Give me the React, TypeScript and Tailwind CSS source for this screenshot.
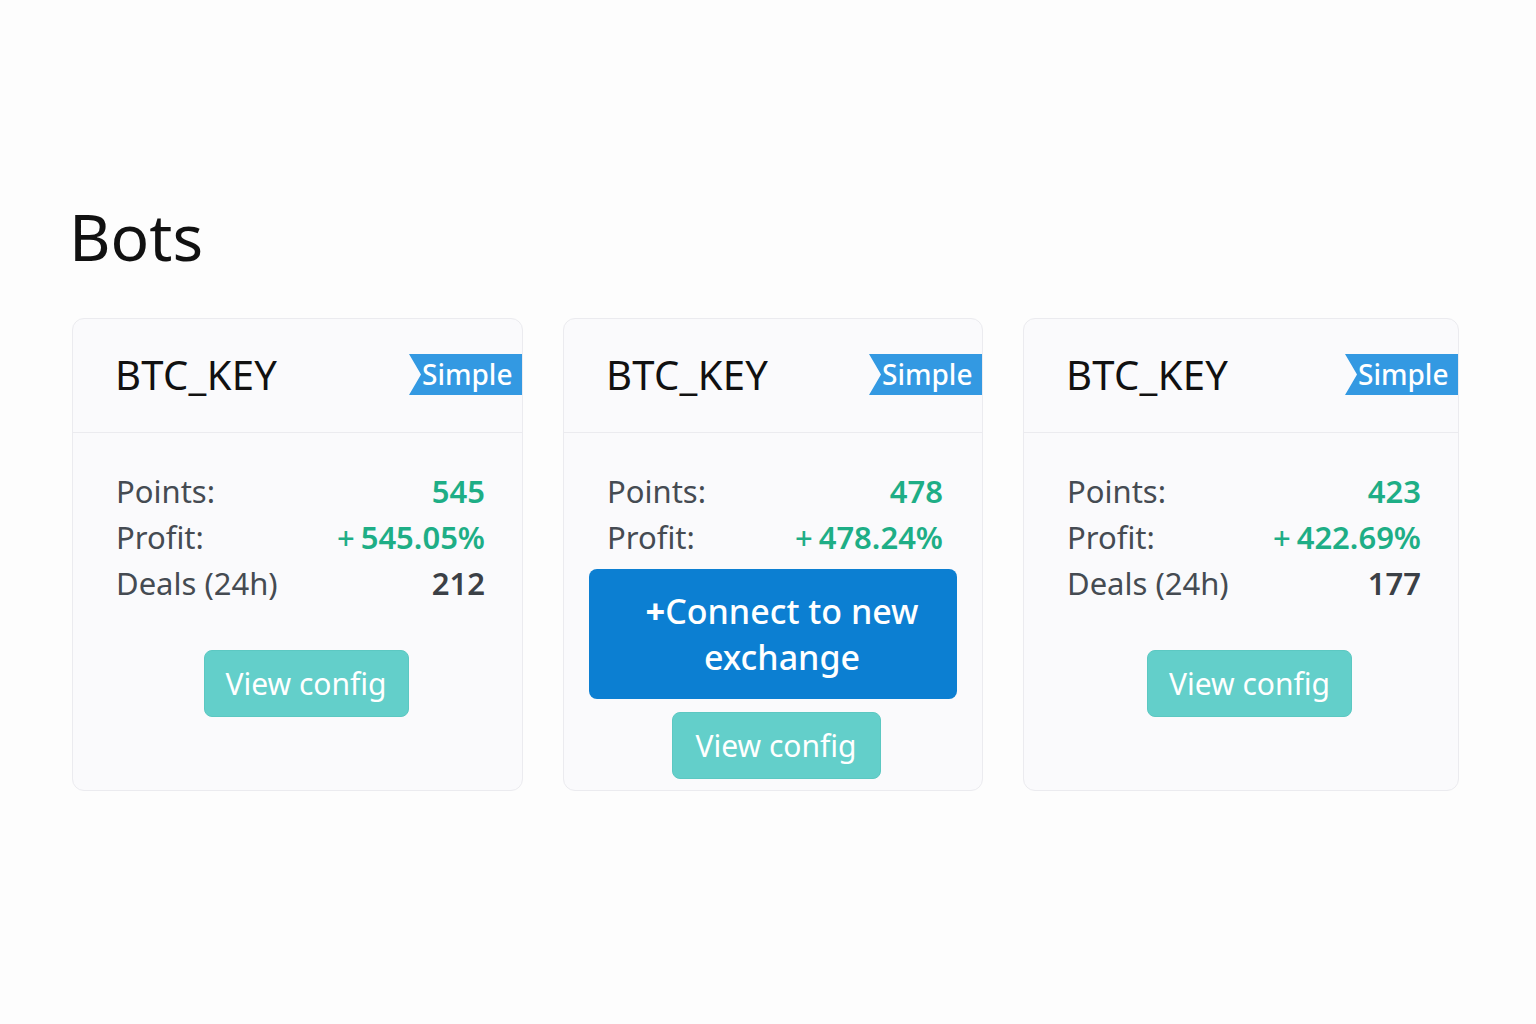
import React from "react";

const font = { fontFamily: '"Noto Sans", "Open Sans", sans-serif' };

function Badge() {
  return (
    <div
      className="h-[41px] w-[113px] bg-[#3399e2] text-white text-[28px] leading-[41px] pl-[13px] font-medium"
      style={{ clipPath: "polygon(0 0, 100% 0, 100% 100%, 0 100%, 12px 50%)" }}
    >
      Simple
    </div>
  );
}

function Header() {
  return (
    <div className="h-[114px] flex items-center justify-between pl-[42px] pb-[2px] border-b border-[#ebebef]">
      <div className="text-[40px] text-[#111] leading-none tracking-[0.3px]">BTC_KEY</div>
      <Badge />
    </div>
  );
}

function Row({ label, value, green, plus }: { label: string; value: string; green?: boolean; plus?: boolean }) {
  return (
    <div className="flex items-center justify-between h-[46px] text-[31px]">
      <span className="text-[#454b52]">{label}</span>
      <span className={green ? "text-[#1eae86] font-semibold" : "text-[#3b4046] font-semibold"}>
        {plus && <span className="font-medium mr-[6px]">+</span>}
        {value}
      </span>
    </div>
  );
}

function ViewConfig({ w }: { w: string }) {
  return (
    <button className={`${w} h-[67px] rounded-lg bg-[#63cfca] text-white text-[30px] leading-none border border-[#5cc8c2]`}>
      View config
    </button>
  );
}

function BotCard({ width, points, profit, deals }: { width: string; points: string; profit: string; deals: string }) {
  return (
    <div className={`${width} h-[473px] rounded-xl border border-[#ebebef] bg-[#fafafc] flex flex-col`}>
      <Header />
      <div className="pt-[35px] pl-[43px] pr-[26px] flex flex-col">
        <div className="pr-[11px]">
          <Row label="Points:" value={points} green />
          <Row label="Profit:" value={profit} green plus />
          <Row label="Deals (24h)" value={deals} />
        </div>
        <div className="mt-[44px] flex justify-center">
          <ViewConfig w="w-[205px]" />
        </div>
      </div>
    </div>
  );
}

function ConnectCard() {
  return (
    <div className="w-[420px] h-[473px] rounded-xl border border-[#ebebef] bg-[#fafafc] flex flex-col">
      <Header />
      <div className="pt-[35px] flex flex-col">
        <div className="pl-[43px] pr-[39px]">
          <Row label="Points:" value="478" green />
          <Row label="Profit:" value="478.24%" green plus />
        </div>
        <div className="px-[25px] mt-[9px]">
          <button className="w-full h-[130px] rounded-lg bg-[#0c7fd2] text-white text-[34px] leading-[46px] font-medium pl-[18px]">
            <span className="font-extrabold">+</span>Connect to new
            <br />
            exchange
          </button>
        </div>
        <div className="mt-[13px] flex justify-center pl-[6px]">
          <ViewConfig w="w-[209px]" />
        </div>
      </div>
    </div>
  );
}

export default function App() {
  return (
    <div className="min-h-[1024px] w-full bg-[#fdfdfd] pt-[205px] pl-[72px]" style={font}>
      <h1 className="text-[64px] leading-none text-[#111] mb-[49px] -ml-[3px]">Bots</h1>
      <div className="flex gap-10 items-start">
        <BotCard width="w-[451px]" points="545" profit="545.05%" deals="212" />
        <ConnectCard />
        <BotCard width="w-[436px]" points="423" profit="422.69%" deals="177" />
      </div>
    </div>
  );
}
